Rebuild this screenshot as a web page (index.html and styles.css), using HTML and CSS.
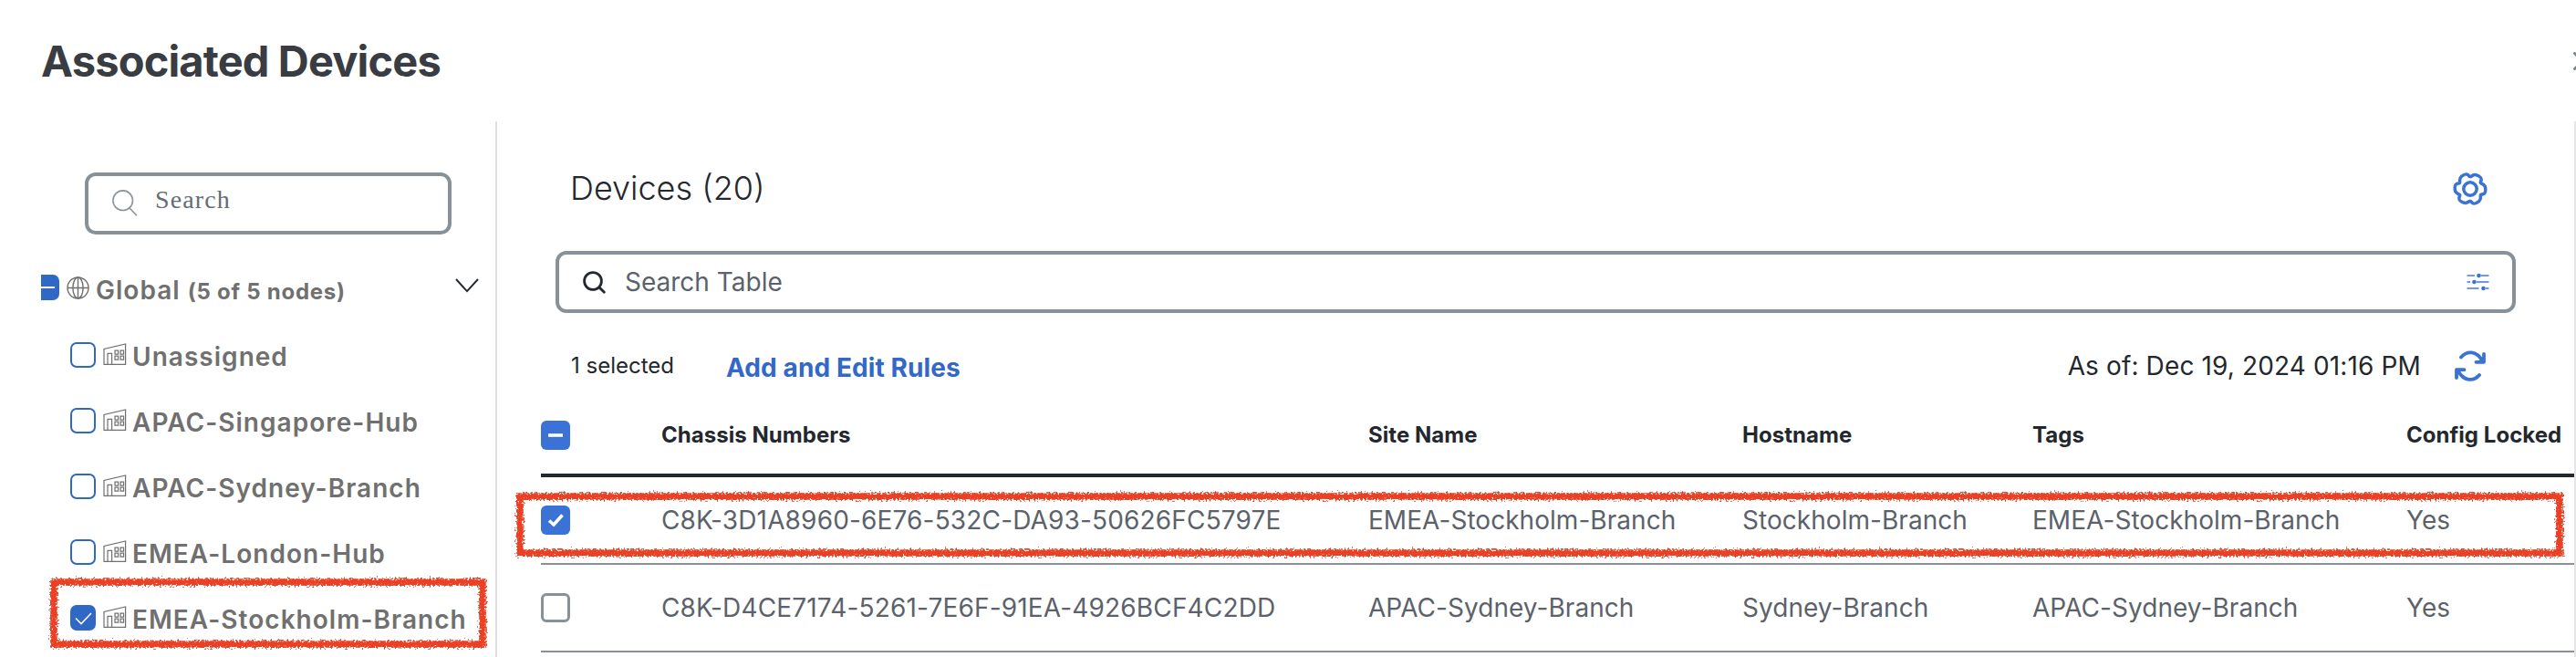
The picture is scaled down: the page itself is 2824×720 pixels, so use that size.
FILE: index.html
```html
<!DOCTYPE html>
<html lang="en">
<head>
<meta charset="utf-8">
<title>Associated Devices</title>
<link rel="stylesheet" href="styles.css">
</head>
<body>
<svg class="defs" width="0" height="0" aria-hidden="true">
  <defs>
    <filter id="crayon" filterUnits="userSpaceOnUse" x="-10" y="-10" width="2300" height="110">
      <feTurbulence type="fractalNoise" baseFrequency="0.5" numOctaves="2" seed="4" result="n"/>
      <feDisplacementMap in="SourceGraphic" in2="n" scale="9" xChannelSelector="R" yChannelSelector="G"/>
    </filter>
    <symbol id="building" viewBox="0 0 26 24">
      <path d="M1 23.3V6.5L24.6 1v22.3zM5 23V11.3h4.6V23M13 8.2h3.6v4H13zM19 8.2h3.6v4H19zM13 14.2h3.6v4H13zM19 14.2h3.6v4H19z" fill="none" stroke="#707070" stroke-width="1.2"/>
    </symbol>
    <path id="lobe" d="M0-13.400C2-13.400 3-16.600 7-15.100C11.800-13.200 12.400-12 12.100-9.700C11.900-8.200 10.800-7.800 11.600-6.700"/>
  </defs>
</svg>
<div class="panel">
  <header class="head">
    <h1 class="title">Associated Devices</h1>
    <svg class="close" viewBox="0 0 20 20"><path d="M1.5 1.5l17 17M18.5 1.5l-17 17" stroke="#7c828b" stroke-width="3" stroke-linecap="round"/></svg>
  </header>
  <div class="body">
    <aside class="side">
      <div class="search">
        <svg width="28" height="29" viewBox="0 0 28 29" fill="none" stroke="#8c9299" stroke-width="1.6"><circle cx="11.7" cy="11.7" r="10.8"/><path d="M19 20l8 8.2"/></svg>
        <span class="search-text">Search</span>
      </div>
      <div class="root">
        <span class="rootbox"></span>
        <svg class="globe" width="25" height="25" viewBox="0 0 25 25" fill="none" stroke="#707070" stroke-width="1.4"><circle cx="12.5" cy="12.5" r="11.5"/><ellipse cx="12.5" cy="12.5" rx="5.6" ry="11.5"/><path d="M12.5 1v23M1 12.5h23"/></svg>
        <span class="node-name">Global</span><span class="count">(5 of 5 nodes)</span>
        <svg class="chev" width="26" height="16" viewBox="0 0 26 16"><path d="M1 1l12 13.2L25 1" fill="none" stroke="#23282e" stroke-width="1.9"/></svg>
      </div>
      <div class="node"><span class="cb"></span><svg class="bld"><use href="#building"/></svg><span class="node-name">Unassigned</span></div>
      <div class="node"><span class="cb"></span><svg class="bld"><use href="#building"/></svg><span class="node-name">APAC-Singapore-Hub</span></div>
      <div class="node"><span class="cb"></span><svg class="bld"><use href="#building"/></svg><span class="node-name">APAC-Sydney-Branch</span></div>
      <div class="node"><span class="cb"></span><svg class="bld"><use href="#building"/></svg><span class="node-name">EMEA-London-Hub</span></div>
      <div class="node"><span class="cb on"><svg width="28" height="28" viewBox="0 0 28 28"><path d="M6 14.5l6 6L23 9" fill="none" stroke="#fff" stroke-width="1.6"/></svg></span><svg class="bld"><use href="#building"/></svg><span class="node-name">EMEA-Stockholm-Branch</span>
        <svg class="mark mark-side" width="486" height="84"><rect x="6" y="7" width="470" height="68" class="mark-line" filter="url(#crayon)"/></svg>
      </div>
    </aside>
    <main class="main">
      <div class="bar">
        <h2 class="subtitle">Devices (20)</h2>
        <svg class="gear" width="38" height="36" viewBox="-19 -18 38 36" fill="none" stroke="#3b72d6" stroke-width="3.500" stroke-linecap="round"><circle r="7.200"/><use href="#lobe"/><use href="#lobe" transform="rotate(60)"/><use href="#lobe" transform="rotate(120)"/><use href="#lobe" transform="rotate(180)"/><use href="#lobe" transform="rotate(240)"/><use href="#lobe" transform="rotate(300)"/></svg>
      </div>
      <div class="table-search">
        <svg width="25" height="25" viewBox="0 0 25 25" fill="none" stroke="#23282e" stroke-width="2.8" stroke-linecap="round"><circle cx="11" cy="11" r="9.400"/><path d="M18 18l5.300 5.300"/></svg>
        <span class="table-search-text">Search Table</span>
        <svg width="25" height="20" viewBox="0 0 25 20"><path d="M0.500 3h8.500M16 3h8.500M0.500 10h3.500M11 10h13.500M0.500 17h13M21 17h3.500" stroke="#6f9aea" stroke-width="2"/><circle cx="13.500" cy="3" r="2.300" fill="#3b72d6"/><circle cx="8.500" cy="10" r="2.300" fill="#3b72d6"/><circle cx="18.500" cy="17" r="2.300" fill="#3b72d6"/></svg>
      </div>
      <div class="tools">
        <span class="selected">1 selected</span>
        <a class="rules">Add and Edit Rules</a>
        <span class="asof">As of: Dec 19, 2024 01:16 PM</span>
        <svg class="refresh" width="36" height="34" viewBox="0 0 36 34" fill="none" stroke="#3b72d6" stroke-width="3.800" stroke-linecap="round" stroke-linejoin="round"><path d="M8 7.500C14 .500 25-.500 31.500 12M33 4v8.800h-8.500M28 27C22 34 11 34.500 4.500 22M3 30v-8.800h8.500"/></svg>
      </div>
      <div class="table">
        <div class="row hrow"><span class="box on"><svg width="32" height="32"><path d="M8 16h16" stroke="#fff" stroke-width="3.600"/></svg></span><span>Chassis Numbers</span><span>Site Name</span><span>Hostname</span><span>Tags</span><span>Config Locked</span></div>
        <div class="row"><span class="box on"><svg width="32" height="32"><path d="M9 16.500l5 4.500L23.500 10.500" fill="none" stroke="#fff" stroke-width="3.600"/></svg></span><span class="chassis">C8K-3D1A8960-6E76-532C-DA93-50626FC5797E</span><span>EMEA-Stockholm-Branch</span><span>Stockholm-Branch</span><span>EMEA-Stockholm-Branch</span><span>Yes</span>
          <svg class="mark mark-row" width="2260" height="90"><rect x="8" y="9" width="2236" height="62" class="mark-line" filter="url(#crayon)"/></svg>
        </div>
        <div class="row"><span class="box"></span><span class="chassis">C8K-D4CE7174-5261-7E6F-91EA-4926BCF4C2DD</span><span>APAC-Sydney-Branch</span><span>Sydney-Branch</span><span>APAC-Sydney-Branch</span><span>Yes</span></div>
      </div>
    </main>
  </div>
</div>
</body>
</html>
```
FILE: styles.css
```css
* { box-sizing: border-box; }
body { margin: 0; background: #fff; font-family: Inter, "Liberation Sans", sans-serif; color: #23282e; overflow: hidden; }
.defs { position: absolute; }
.panel { width: 2824px; height: 720px; overflow: hidden; display: flex; flex-direction: column; }
.head { height: 133px; flex: none; display: flex; justify-content: space-between; padding-left: 45px; overflow: hidden; }
.title { margin: 38px 0 0; font-size: 47px; line-height: 58px; font-weight: 700; letter-spacing: -0.85px; color: #393c42; white-space: nowrap; }
.close { flex: none; width: 20px; height: 20px; margin: 57px -17px 0 0; }
.body { flex: 1; display: flex; min-height: 0; }
.side { width: 545px; flex: none; border-right: 2px solid #dedede; padding: 56px 0 0 45px; }
.search { width: 402px; height: 68px; margin-left: 48px; border: 4px solid #889098; border-radius: 12px; display: flex; padding: 15px 0 0 26px; }
.search-text { font: 28px/32px "Liberation Serif", serif; letter-spacing: 1.1px; color: #656c75; margin: -5px 0 0 19px; }
.root { height: 72px; margin-top: 24px; display: flex; align-items: center; color: #707070; }
.rootbox { width: 20px; height: 28px; border-radius: 0 7px 7px 0; background: #2f68c5; margin: -4px 8px 0 0; display: flex; align-items: center; }
.rootbox::before { content: ""; width: 15px; height: 2px; background: #fff; }
.globe { margin-top: -4px; margin-right: 7px; }
.node-name { font-size: 28px; line-height: 34px; font-weight: 600; letter-spacing: 1.03px; color: #707070; white-space: nowrap; }
.root .node-name { margin-top: 1px; }
.count { font-size: 24px; font-weight: 700; letter-spacing: 0.75px; margin: 4px 0 0 8px; }
.chev { margin: -8px 18px 0 auto; }
.node { position: relative; height: 72px; display: flex; align-items: center; padding-left: 32px; }
.node .node-name { margin-top: 4px; }
.cb { width: 28px; height: 28px; border: 2px solid #2f68c5; border-radius: 7px; }
.cb.on { background: #2f68c5; border: 0; }
.cb svg, .box svg { display: block; }
.bld { width: 26px; height: 24px; margin: -3px 6px 0 8px; }
.mark { position: absolute; overflow: visible; pointer-events: none; }
.mark-side { left: 8px; top: -10px; }
.mark-row { left: -31px; top: 12px; }
.mark-line { fill: none; stroke: #ea4025; stroke-width: 7.5; }
.main { flex: 1; min-width: 0; border-right: 2px solid #e6e6e6; padding-left: 48px; }
.bar { display: flex; justify-content: space-between; padding: 50px 95px 0 32px; height: 142px; }
.subtitle { margin: 0; font-size: 36px; line-height: 46px; font-weight: 300; white-space: nowrap; }
.gear { margin-top: 6px; }
.table-search { height: 68px; width: 2149px; margin-left: 16px; border: 4px solid #889098; border-radius: 12px; display: flex; align-items: center; padding: 0 25px 0 26px; }
.table-search-text { flex: 1; margin-left: 21px; font-size: 28px; color: #5b626b; }
.tools { height: 101px; display: flex; padding-left: 33px; line-height: 34px; white-space: nowrap; }
.selected { font-size: 24px; margin-top: 41px; width: 170px; }
.rules { font-size: 28px; font-weight: 700; letter-spacing: 0.1px; color: #3367c8; margin-top: 43px; }
.asof { font-size: 28px; letter-spacing: 0.13px; margin: 41px 36px 0 auto; }
.refresh { margin: 41px 96px 0 0; }
.row { position: relative; height: 96px; display: grid; grid-template-columns: 132px 775px 410px 318px 410px 1fr; align-items: center; border-bottom: 2px solid #8a8f9c; font-size: 28px; letter-spacing: 0.04px; color: #5b626b; white-space: nowrap; }
.hrow { height: 79px; align-items: start; padding-top: 17px; border-bottom: 4px solid #23282e; font-size: 24px; line-height: 32px; font-weight: 700; color: #23282e; }
.chassis { letter-spacing: 0.16px; }
.box { width: 32px; height: 32px; border: 3px solid #889098; border-radius: 6px; }
.box.on { background: #3b72d6; border: 0; }
```
